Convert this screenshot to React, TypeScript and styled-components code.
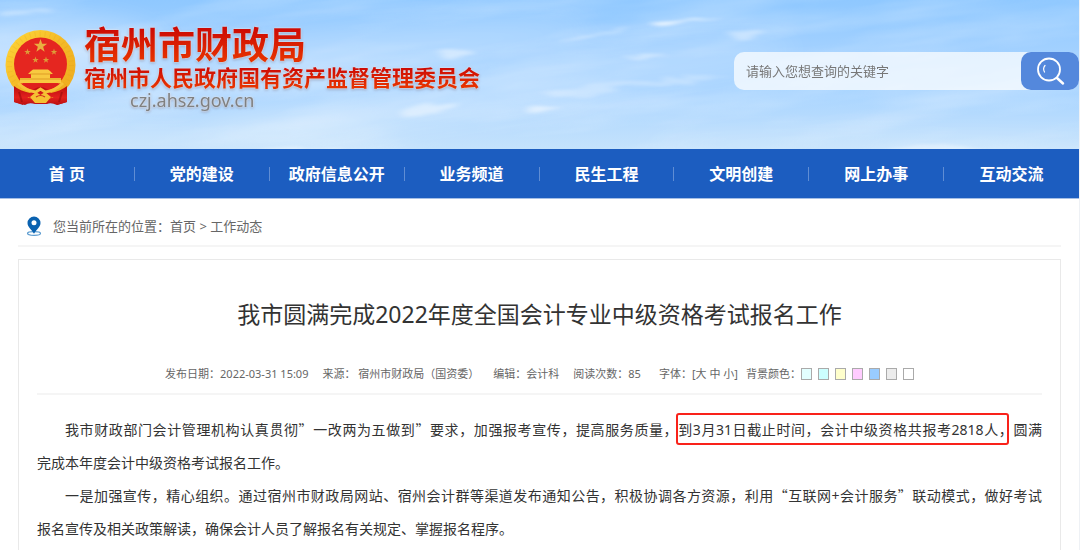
import React from "react";
import styled, { createGlobalStyle } from "styled-components";

const GlobalStyle = createGlobalStyle`
  *, *::before, *::after { box-sizing: border-box; }
  body {
    margin: 0;
    background: #fff;
    color: #333;
    font-family: "Noto Sans", "Noto Sans CJK SC", sans-serif;
    text-spacing-trim: space-all;
  }
  h1, h2, p, ul { margin: 0; padding: 0; }
  a { color: inherit; text-decoration: none; }
`;

const Page = styled.div`
  display: flex;
  flex-direction: column;
  min-height: 100vh;
  border-right: 1px solid #eef1f5;
`;

const Header = styled.header`
  position: relative;
  display: flex;
  justify-content: space-between;
  align-items: flex-start;
  height: 149px;
  overflow: hidden;
  background: linear-gradient(180deg, #8fc8ff 0%, #a3d1ff 35%, #acd6ff 65%, #c4e2fc 100%);
`;

const Sky = styled.svg`
  position: absolute;
  inset: 0;
  width: 100%;
  height: 100%;
`;

const Brand = styled.a`
  position: relative;
  display: flex;
  gap: 7px;
  padding: 22px 0 0 5px;
`;

const Emblem = styled.svg`
  width: 72px;
  height: 78px;
  margin-top: 7px;
`;

const BrandText = styled.div`
  display: flex;
  flex-direction: column;
  font-family: "Noto Sans CJK SC", sans-serif;
  font-weight: 700;
  filter: drop-shadow(0 0 1px #fff) drop-shadow(0 1px 1px rgba(90, 70, 90, 0.4));
`;

const BrandLine = styled.span<{ $size: number; $line: number }>`
  font-size: ${(p) => p.$size}px;
  line-height: ${(p) => p.$line}px;
  color: transparent;
  background: linear-gradient(180deg, #cc0a05 15%, #e63200 90%);
  background-clip: text;
  -webkit-background-clip: text;
  white-space: nowrap;
`;

const Domain = styled.span`
  padding-left: 46px;
  font: 400 18px/22px "Noto Sans", sans-serif;
  color: #808080;
`;

const Search = styled.form`
  position: relative;
  display: flex;
  width: 345px;
  height: 38px;
  margin-top: 52px;
  border-radius: 10px;
  background: rgba(255, 255, 255, 0.72);
`;

const SearchInput = styled.input`
  flex: 1;
  min-width: 0;
  padding: 0 12px;
  border: 0;
  outline: 0;
  background: transparent;
  font: 13px "Noto Sans", "Noto Sans CJK SC", sans-serif;
  color: #555;
  &::placeholder { color: #777; opacity: 1; }
`;

const SearchButton = styled.button`
  display: flex;
  align-items: center;
  justify-content: center;
  width: 58px;
  padding: 0;
  border: 0;
  border-radius: 10px;
  background: #5488dc;
  cursor: pointer;
`;

const Nav = styled.nav`
  border-bottom: 1px solid #a5bfe6;
  background: #1c5dc0;
`;

const NavList = styled.ul`
  display: flex;
  list-style: none;
`;

const NavItem = styled.li`
  display: flex;
  flex: 1;
  align-items: center;
  height: 49px;
  &:not(:last-child)::after {
    content: "";
    width: 1px;
    height: 14px;
    background: #5f8dd4;
  }
`;

const NavLink = styled.a`
  flex: 1;
  padding-top: 2px;
  text-align: center;
  color: #fff;
  font-size: 16px;
  font-weight: 700;
  line-height: 47px;
  white-space: nowrap;
`;

const Main = styled.main`
  display: flex;
  flex: 1;
  flex-direction: column;
  padding: 0 18px;
`;

const Breadcrumb = styled.nav`
  display: flex;
  align-items: center;
  gap: 11px;
  height: 48px;
  padding: 7px 8px 0;
  border-bottom: 2px solid #f5f5f5;
  color: #666;
  font-size: 13px;
`;

const Article = styled.article`
  flex: 1;
  margin-top: 12px;
  padding: 0 18px;
  border: 1px solid #e9e9e9;
  border-bottom: 0;
`;

const Title = styled.h2`
  padding-top: 34px;
  font-size: 23px;
  font-weight: 400;
  line-height: 40px;
  text-align: center;
`;

const Meta = styled.div`
  display: flex;
  justify-content: center;
  align-items: center;
  gap: 14px;
  height: 59px;
  padding-top: 20px;
  color: #666;
  font-size: 11px;
  line-height: 20px;
  white-space: nowrap;
`;

const Divider = styled.hr`
  height: 2px;
  margin: 0 0 18px;
  border: 0;
  background: #f5f5f5;
`;

const Tools = styled.div`
  display: flex;
  align-items: center;
  gap: 8px;
  padding-left: 4px;
`;

const PlainButton = styled.button`
  padding: 0;
  border: 0;
  background: none;
  color: inherit;
  font: inherit;
  cursor: pointer;
`;

const ColourPicker = styled.div`
  display: flex;
  align-items: center;
`;

const Swatches = styled.div`
  display: flex;
  gap: 6px;
`;

const Swatch = styled.button<{ $color: string }>`
  width: 11px;
  height: 12px;
  padding: 0;
  border: 1px solid #aaa;
  background: ${(p) => p.$color};
  cursor: pointer;
`;

const Paragraph = styled.p`
  font-size: 14px;
  line-height: 33px;
`;

const Line = styled.span<{ $first?: boolean; $full?: boolean }>`
  display: block;
  padding-left: ${(p) => (p.$first ? "28px" : "0")};
  text-align: ${(p) => (p.$full ? "justify" : "left")};
  text-align-last: ${(p) => (p.$full ? "justify" : "left")};
`;

const Quote = styled.span`
  font-family: "Noto Sans CJK SC", sans-serif;
  line-height: 20px;
`;

const Highlight = styled.mark`
  position: relative;
  background: none;
  color: inherit;
  &::after {
    content: "";
    position: absolute;
    inset: -7px 4px -6px -2px;
    border: 2px solid #f9221a;
    border-radius: 3px;
  }
`;

const channels = ["首 页", "党的建设", "政府信息公开", "业务频道", "民生工程", "文明创建", "网上办事", "互动交流"];

const backgrounds = [
  { name: "浅青", color: "#e3ffff" },
  { name: "青色", color: "#ccffff" },
  { name: "黄色", color: "#ffffcc" },
  { name: "粉色", color: "#ffccff" },
  { name: "蓝色", color: "#99ccff" },
  { name: "灰色", color: "#ececec" },
  { name: "白色", color: "#ffffff" },
];

const star = (cx: number, cy: number, r: number) =>
  Array.from({ length: 10 }, (_, i) => {
    const a = (Math.PI / 5) * i - Math.PI / 2;
    const d = i % 2 ? r * 0.4 : r;
    return `${(cx + d * Math.cos(a)).toFixed(2)},${(cy + d * Math.sin(a)).toFixed(2)}`;
  }).join(" ");

function Clouds() {
  return (
    <Sky viewBox="0 0 1080 149" preserveAspectRatio="none" aria-hidden="true">
      <defs>
        <filter id="soft" x="-50%" y="-100%" width="200%" height="300%">
          <feGaussianBlur stdDeviation="14" />
        </filter>
        <filter id="haze" x="0" y="0" width="100%" height="100%">
          <feTurbulence type="fractalNoise" baseFrequency="0.005 0.03" numOctaves="4" seed="11" />
          <feColorMatrix values="0 0 0 0 1  0 0 0 0 1  0 0 0 0 1  1.6 0 0 0 -.62" />
        </filter>
        <filter id="wisp" x="-30%" y="-100%" width="160%" height="300%">
          <feTurbulence type="fractalNoise" baseFrequency="0.03 0.1" numOctaves="3" seed="4" />
          <feDisplacementMap in="SourceGraphic" scale="12" />
          <feGaussianBlur stdDeviation="5 1.500" />
        </filter>
      </defs>
      <rect x="-60" y="-120" width="1200" height="420" transform="rotate(-7 540 75)" filter="url(#haze)" opacity=".32" />
      <g fill="#fff" filter="url(#soft)">
        <ellipse cx="40" cy="45" rx="120" ry="30" opacity=".3" />
        <ellipse cx="330" cy="55" rx="260" ry="24" opacity=".2" transform="rotate(-6 330 55)" />
        <ellipse cx="400" cy="110" rx="200" ry="18" opacity=".24" transform="rotate(-7 400 110)" />
        <ellipse cx="640" cy="65" rx="160" ry="20" opacity=".18" transform="rotate(-6 640 65)" />
        <ellipse cx="120" cy="140" rx="280" ry="14" opacity=".2" />
        <ellipse cx="900" cy="146" rx="260" ry="12" opacity=".2" />
      </g>
      <g fill="#fff" filter="url(#wisp)">
        <path d="M560 42 Q600 32 630 24 L620 28 Q600 36 565 43Z" opacity=".5" />
        <path d="M652 24 Q685 17 722 17 Q690 22 655 26Z" opacity=".75" />
        <path d="M730 34 Q745 28 768 31 Q756 40 740 41Z" opacity=".35" />
        <path d="M402 112 Q430 99 462 104 Q440 114 405 119Z" opacity=".4" />
        <path d="M525 109 Q545 103 562 108 Q545 113 528 112Z" opacity=".5" />
        <path d="M440 54 Q465 47 475 52 Q460 57 445 58Z" opacity=".4" />
        <path d="M625 57 Q650 53 668 55 Q650 58 630 59Z" opacity=".4" />
        <path d="M540 94 Q630 78 735 77 Q640 84 560 98Z" opacity=".25" />
        <path d="M0 10 Q30 7 55 11 Q30 15 0 15Z" opacity=".3" />
        <path d="M260 148 Q300 144 345 149 L340 154 L260 154Z" opacity=".35" />
        <path d="M890 148 Q940 140 985 148 L970 153 L890 153Z" opacity=".35" />
      </g>
    </Sky>
  );
}

function NationalEmblem() {
  return (
    <Emblem viewBox="0 0 72 78" role="img" aria-label="国徽">
      <defs>
        <linearGradient id="gold" x1="0" y1="0" x2="1" y2="1">
          <stop offset="0" stopColor="#ffd83c" />
          <stop offset=".5" stopColor="#f4b926" />
          <stop offset="1" stopColor="#eda91d" />
        </linearGradient>
        <linearGradient id="cloth" x1="0" y1="0" x2="0" y2="1">
          <stop offset="0" stopColor="#b80d10" />
          <stop offset=".6" stopColor="#e3201d" />
          <stop offset="1" stopColor="#b90f12" />
        </linearGradient>
      </defs>
      <path d="M9 57 Q22 64 36 61 Q50 64 62 57 L62 73 L52 76 Q46 73 42 75 L30 75 Q24 73 20 76 L9 73Z" fill="url(#cloth)" />
      <circle cx="35.500" cy="36" r="35" fill="url(#gold)" />
      <circle cx="35.500" cy="36" r="31" fill="none" stroke="#d99718" strokeWidth="5" strokeDasharray="1 4" opacity=".18" />
      <circle cx="35.500" cy="35" r="26.500" fill="#e52620" />
      <polygon points={star(35.5, 17, 7)} fill="#e9b040" />
      <polygon points={star(22.5, 23, 3.4)} fill="#dd9c38" />
      <polygon points={star(49, 23, 3.4)} fill="#dd9c38" />
      <polygon points={star(30.5, 31, 3.4)} fill="#dd9c38" />
      <polygon points={star(41, 31, 3.4)} fill="#dd9c38" />
      <path d="M26 42 L28 40.500 H43 L45 42 L48 45 H45 V49 H56 V54 H15 V49 H26 V45 H23Z" fill="#f8c940" />
      <path d="M25 45 H46 M15 50 H56" stroke="#d68a1c" strokeWidth=".7" />
      <path d="M15 54.500 H56 Q48 62 35.500 62 Q23 62 15 54.500Z" fill="#df201d" />
      <path d="M9 57 Q15 62 25 64 L29 60 Q35.500 56 42 60 L46 64 Q56 62 62 57 L62 73 L52 76 L48 68 L41 71 L30 71 L23 68 L18 76 L9 73Z" fill="url(#cloth)" />
      <path d="M13 54 Q21 62 31 63 L35.500 60 L40 63 Q50 62 58 54" fill="none" stroke="#f6c238" strokeWidth="3" />
      <path d="M25 68 L31 63 L35.500 66 L40 63 L46 68 L41 74 H30Z" fill="#f5c033" />
      <path d="M31 68 Q35.500 65 40 68" fill="none" stroke="#d12a1a" strokeWidth="1.200" />
      <path d="M14 63 L17 73 M57 63 L54 73" stroke="#8e090c" strokeWidth="2" opacity=".5" />
    </Emblem>
  );
}

export default function App() {
  return (
    <>
      <GlobalStyle />
      <Page>
        <Header>
          <Clouds />
          <Brand href="#">
            <NationalEmblem />
            <BrandText>
              <BrandLine $size={37} $line={42}>宿州市财政局</BrandLine>
              <BrandLine $size={22} $line={25}>宿州市人民政府国有资产监督管理委员会</BrandLine>
              <Domain>czj.ahsz.gov.cn</Domain>
            </BrandText>
          </Brand>
          <Search onSubmit={(e) => e.preventDefault()}>
            <SearchInput type="text" aria-label="搜索" placeholder="请输入您想查询的关键字" />
            <SearchButton type="submit" aria-label="查询">
              <svg width="30" height="30" viewBox="0 0 30 30" fill="none" stroke="#fff" strokeLinecap="round">
                <circle cx="14" cy="13.500" r="11" strokeWidth="1.800" />
                <path d="M22 22 L28 27.500" strokeWidth="2.500" />
                <path d="M10 9.500 Q7.500 12.500 9.500 16" strokeWidth="1.200" />
              </svg>
            </SearchButton>
          </Search>
        </Header>
        <Nav aria-label="频道">
          <NavList>
            {channels.map((name) => (
              <NavItem key={name}>
                <NavLink href="#">{name}</NavLink>
              </NavItem>
            ))}
          </NavList>
        </Nav>
        <Main>
          <Breadcrumb aria-label="当前位置">
            <svg width="16" height="20" viewBox="0 0 16 20" aria-hidden="true">
              <ellipse cx="8" cy="17.500" rx="6.500" ry="1.800" fill="none" stroke="#5c9cd0" strokeWidth="1.200" />
              <path d="M8 0.500 A6.500 6.500 0 0 1 14.500 7 C14.500 10.800 10.500 13.500 8 17.800 C5.500 13.500 1.500 10.800 1.500 7 A6.500 6.500 0 0 1 8 0.500Z" fill="#0a62b0" />
              <circle cx="8" cy="6.800" r="2.500" fill="#fff" />
            </svg>
            <span>
              您当前所在的位置：<a href="#">首页</a> &gt; <a href="#">工作动态</a>
            </span>
          </Breadcrumb>
          <Article>
            <Title>我市圆满完成2022年度全国会计专业中级资格考试报名工作</Title>
            <Meta>
              <span>发布日期：2022-03-31 15:09</span>
              <span>来源： 宿州市财政局（国资委）</span>
              <span>编辑：会计科</span>
              <span>阅读次数：85</span>
              <Tools>
                <span>
                  字体：[<PlainButton type="button">大</PlainButton> <PlainButton type="button">中</PlainButton>{" "}
                  <PlainButton type="button">小</PlainButton>]
                </span>
                <ColourPicker>
                  <span>背景颜色：</span>
                  <Swatches>
                    {backgrounds.map((b) => (
                      <Swatch key={b.name} type="button" aria-label={b.name} $color={b.color} />
                    ))}
                  </Swatches>
                </ColourPicker>
              </Tools>
            </Meta>
            <Divider />
            <Paragraph>
              <Line $first $full>
                我市财政部门会计管理机构认真贯彻<Quote>”</Quote>一改两为五做到<Quote>”</Quote>要求，加强报考宣传，提高服务质量，<Highlight>到3月31日截止时间，会计中级资格共报考2818人，</Highlight>圆满
              </Line>
              <Line>完成本年度会计中级资格考试报名工作。</Line>
            </Paragraph>
            <Paragraph>
              <Line $first $full>
                一是加强宣传，精心组织。通过宿州市财政局网站、宿州会计群等渠道发布通知公告，积极协调各方资源，利用<Quote>“</Quote>互联网+会计服务<Quote>”</Quote>联动模式，做好考试
              </Line>
              <Line>报名宣传及相关政策解读，确保会计人员了解报名有关规定、掌握报名程序。</Line>
            </Paragraph>
          </Article>
        </Main>
      </Page>
    </>
  );
}
